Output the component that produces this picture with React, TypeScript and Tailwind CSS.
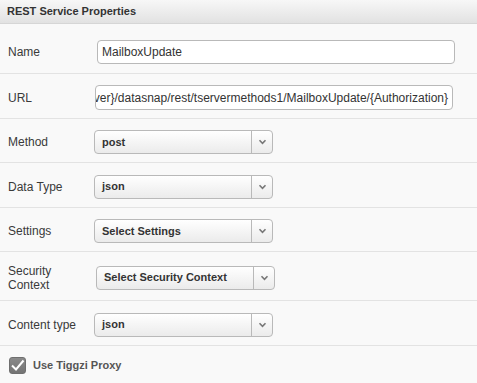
import type React from "react";

const font = { fontFamily: '"Liberation Sans", Arial, sans-serif' };

function Chevron() {
  return (
    <svg width="9" height="6" viewBox="0 0 9 6">
      <path d="M1.5 1.3 L4.5 4.3 L7.5 1.3" fill="none" stroke="#777" strokeWidth="1.6" />
    </svg>
  );
}

function Select({ value, className }: { value: string; className: string }) {
  return (
    <div
      className={`flex h-[24px] items-stretch rounded-[4px] border border-[#b9b9b9] bg-gradient-to-b from-[#ffffff] to-[#ebebeb] ${className}`}
    >
      <div className="flex flex-1 items-center pl-[7px] text-[11px] font-bold text-[#333]">
        {value}
      </div>
      <div className="flex w-[21px] items-center justify-center border-l border-[#b9b9b9]">
        <Chevron />
      </div>
    </div>
  );
}

function Row({
  label,
  height,
  children,
}: {
  label: React.ReactNode;
  height: string;
  children: React.ReactNode;
}) {
  return (
    <div className={`flex items-center border-b border-[#e3e3e3] ${height}`}>
      <div className="w-[86px] shrink-0 pl-[8px] text-[12px] leading-[14px] text-[#3a3a3a]">
        {label}
      </div>
      {children}
    </div>
  );
}

export default function App() {
  return (
    <div className="h-[383px] w-[477px] overflow-hidden bg-[#f9f9f9]" style={font}>
      <div className="flex h-[24px] items-center border-b border-[#d6d6d6] bg-gradient-to-b from-[#f7f7f7] to-[#e2e2e2] pl-[7px] text-[11px] font-bold text-[#333]">
        REST Service Properties
      </div>

      <Row label="Name" height="h-[50px] pt-[7px]">
        <div className="ml-[11px] flex h-[24px] w-[358px] items-center rounded-[4px] border border-[#b9b9b9] bg-white pl-[4px] text-[12px] text-[#333]">
          MailboxUpdate
        </div>
      </Row>

      <Row label="URL" height="h-[45px] pt-[3px]">
        <div className="ml-[9px] flex h-[25px] w-[358px] items-center justify-end overflow-hidden whitespace-nowrap rounded-[4px] border border-[#b9b9b9] bg-white pr-[4px] text-[12px] text-[#333]">
          http://{"{"}server{"}"}/datasnap/rest/tservermethods1/MailboxUpdate/{"{"}Authorization{"}"}
        </div>
      </Row>

      <Row label="Method" height="h-[44px] pt-[3px]">
        <Select value="post" className="ml-[8px] w-[179px]" />
      </Row>

      <Row label="Data Type" height="h-[45px] pt-[3px]">
        <Select value="json" className="ml-[8px] w-[179px]" />
      </Row>

      <Row label="Settings" height="h-[44px] pt-[3px]">
        <Select value="Select Settings" className="ml-[8px] w-[179px]" />
      </Row>

      <Row
        label={
          <>
            Security
            <br />
            Context
          </>
        }
        height="h-[49px] pt-[3px]"
      >
        <Select value="Select Security Context" className="ml-[10px] w-[179px]" />
      </Row>

      <Row label="Content type" height="h-[45px] pt-[3px]">
        <Select value="json" className="ml-[8px] w-[179px]" />
      </Row>

      <div className="flex h-[37px] items-center pl-[9px] pt-[2px]">
        <div className="flex h-[17px] w-[17px] items-center justify-center rounded-[3px] border border-[#6f6f6f] bg-gradient-to-b from-[#8a8a8a] to-[#747474]">
          <svg width="15" height="13" viewBox="0 0 15 13">
            <path d="M2 6.5 L6 10.5 L13.5 1.5" fill="none" stroke="#fff" strokeWidth="2" />
          </svg>
        </div>
        <span className="ml-[7px] text-[11px] font-bold text-[#555]">Use Tiggzi Proxy</span>
      </div>
    </div>
  );
}
